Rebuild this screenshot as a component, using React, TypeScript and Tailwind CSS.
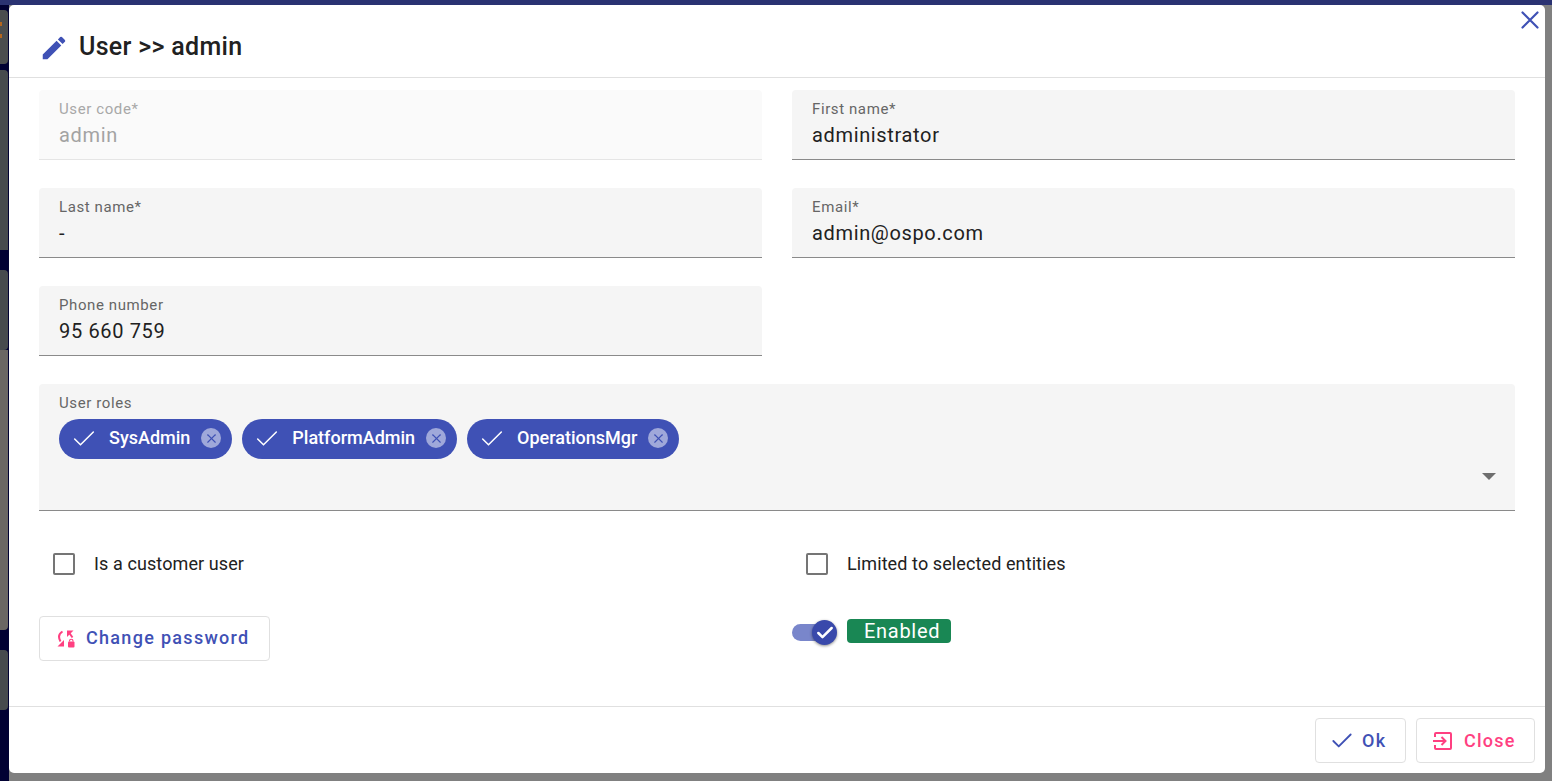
import { Check, X } from "lucide-react"

const roles = ["SysAdmin", "PlatformAdmin", "OperationsMgr"]

function Field({ label, value, disabled }: { label: string; value: string; disabled?: boolean }) {
  return (
    <div
      className={`h-[70px] rounded-t-[4px] px-5 pt-[11px] border-b ${
        disabled ? "bg-[#fafafa] border-[#e5e5e5]" : "bg-[#f5f5f5] border-[#8a8a8a]"
      }`}
    >
      <div
        className={`text-[15px] leading-[17px] tracking-[0.6px] ${disabled ? "text-[#a8a8a8]" : "text-[#666666]"}`}
      >
        {label}
      </div>
      <div
        className={`mt-[5px] text-[20px] leading-[24px] tracking-[0.65px] ${disabled ? "text-[#a3a3a3]" : "text-[#212121]"}`}
      >
        {value}
      </div>
    </div>
  )
}

function CheckRow({ label }: { label: string }) {
  return (
    <div className="flex items-center h-[24px] pl-[14px]">
      <div className="w-[22px] h-[22px] rounded-[2px] border-2 border-[#757575]" />
      <span className="ml-[19px] text-[18px] text-[#212121] leading-[24px] tracking-[0.1px]">{label}</span>
    </div>
  )
}

function PasswordIcon() {
  return (
    <svg width="20" height="20" viewBox="0 0 20 20" fill="none" className="shrink-0">
      <path d="M5.500 2.500C2 4.500 1 8 3.500 12.500" stroke="#ff4081" strokeWidth="2" />
      <path d="M7 11v6.500H0.500z" fill="#ff4081" />
      <path d="M10 1.500h6.500L10 8z" fill="#ff4081" />
      <path d="M12 3.500l3.500 5" stroke="#ff4081" strokeWidth="2" />
      <rect x="11" y="12.500" width="6.500" height="6" rx="1" fill="#ff4081" />
      <path d="M12.500 12.500v-0.500a1.750 1.750 0 0 1 3.500 0v0.500" stroke="#ff4081" strokeWidth="1.200" />
    </svg>
  )
}

export default function App() {
  return (
    <div className="relative w-[1552px] h-[781px] overflow-hidden bg-[#808080] font-['Roboto',sans-serif]">
      {/* page behind the dialog */}
      <div className="h-[5px] bg-[#2a3272]" />
      <div className="absolute left-0 top-[5px] bottom-0 w-[9px] bg-[#010133] flex flex-col">
        <div className="relative mt-[5px] h-[54px] w-[8px] rounded-r-[4px] bg-[#4b4d4e]">
          <div className="absolute left-0 top-[12px] w-[2px] h-[4px] bg-[#b5651d]" />
          <div className="absolute left-0 top-[24px] w-[2px] h-[4px] bg-[#b5651d]" />
        </div>
        <div className="mt-[6px] h-[180px] w-[8px] rounded-tr-[4px] bg-[#474b4d]" />
        <div className="mt-[20px] h-[80px] w-[8px] rounded-r-[4px] bg-[#474b4d]" />
        <div className="h-[280px] w-[8px] rounded-br-[4px] bg-[#6b6763]" />
        <div className="mt-[20px] h-[60px] w-[8px] rounded-r-[4px] bg-[#474b4d]" />
      </div>

      {/* dialog */}
      <div className="absolute left-[9px] top-[5px] w-[1536px] h-[768px] rounded-[5px] bg-white flex flex-col">
        <button className="absolute right-[5px] top-[5px]">
          <svg width="20" height="20" viewBox="0 0 20 20" stroke="#3f51b5" strokeWidth="2.200" strokeLinecap="round">
            <path d="M2.500 2.500l15 15M17.500 2.500l-15 15" />
          </svg>
        </button>

        <div className="h-[73px] shrink-0 flex items-center pl-[30px] pt-[13px] pb-[2px] border-b border-[#e0e0e0]">
          <svg width="30" height="30" viewBox="0 0 24 24" fill="#3f51b5" className="shrink-0 mt-[2px]">
            <path d="M3 17.250V21h3.750L17.810 9.940l-3.750-3.750L3 17.250zM20.710 7.040a1 1 0 0 0 0-1.410l-2.340-2.340a1 1 0 0 0-1.410 0l-1.830 1.830 3.750 3.750 1.830-1.830z" />
          </svg>
          <h1 className="ml-[10px] text-[25px] font-medium text-[#212121] tracking-[0.3px] leading-[32px]">
            User &gt;&gt; admin
          </h1>
        </div>

        <div className="flex-1 px-[30px] pt-[12px]">
          <div className="grid grid-cols-2 gap-x-[30px] gap-y-[28px]">
            <Field label="User code*" value="admin" disabled />
            <Field label="First name*" value="administrator" />
            <Field label="Last name*" value="-" />
            <Field label="Email*" value="admin@ospo.com" />
            <Field label="Phone number" value="95 660 759" />
            <div />
          </div>

          <div className="relative mt-[28px] h-[127px] rounded-t-[4px] bg-[#f5f5f5] border-b border-[#8a8a8a] px-5 pt-[11px]">
            <div className="text-[15px] leading-[17px] tracking-[0.6px] text-[#666666]">User roles</div>
            <div className="mt-[7px] flex gap-[10px]">
              {roles.map((r) => (
                <div key={r} className="flex items-center h-[40px] rounded-full bg-[#3f51b5] pl-[11px] pr-[11px] text-white">
                  <Check size={28} strokeWidth={1.3} />
                  <span className="ml-[11px] pb-[2px] text-[18px] font-medium leading-[24px]">{r}</span>
                  <span className="ml-[11px] mb-[2px] w-[20px] h-[20px] rounded-full bg-[#9fa8da] flex items-center justify-center text-[#3f51b5]">
                    <X size={15} strokeWidth={1.800} />
                  </span>
                </div>
              ))}
            </div>
            <div className="absolute right-[19px] top-[89px] w-0 h-0 border-x-[7px] border-x-transparent border-t-[7px] border-t-[#6e6e6e]" />
          </div>

          <div className="mt-[41px] grid grid-cols-2 gap-x-[30px]">
            <CheckRow label="Is a customer user" />
            <CheckRow label="Limited to selected entities" />
          </div>

          <div className="mt-[40px] grid grid-cols-2 gap-x-[30px]">
            <div>
              <button className="flex items-center h-[45px] w-[231px] rounded-[4px] border border-[#e0e0e0] pl-[17px] text-[#3f51b5] text-[18px] font-medium tracking-[1.3px]">
                <PasswordIcon />
                <span className="ml-[9px] pb-[2px]">Change password</span>
              </button>
            </div>
            <div className="flex items-start">
              <div className="relative mt-[8px] w-[32px] h-[17px] rounded-full bg-[#7986cb]">
                <div className="absolute left-[20px] top-[-4px] w-[25px] h-[25px] rounded-full bg-[#3949ab] shadow-[0_1px_3px_rgba(0,0,0,0.45)] flex items-center justify-center text-white">
                  <Check size={20} strokeWidth={3} />
                </div>
              </div>
              <span className="ml-[23px] mt-[3px] h-[24px] w-[104px] pl-[17px] rounded-[4px] bg-[#198754] text-white text-[20px] font-normal leading-[24px] tracking-[0.7px]">
                Enabled
              </span>
            </div>
          </div>
        </div>

        <div className="h-[67px] shrink-0 border-t border-[#e0e0e0] flex justify-end items-start gap-[10px] pt-[11px] pr-[10px]">
          <button className="flex items-center gap-[7px] h-[45px] w-[91px] pl-[13px] rounded-[4px] border border-[#e0e0e0] text-[#3f51b5] text-[18px] font-medium tracking-[1.25px]">
            <Check size={26} strokeWidth={1.700} />
            Ok
          </button>
          <button className="flex items-center gap-[12px] h-[45px] w-[119px] pl-[16px] rounded-[4px] border border-[#e0e0e0] text-[#ff4081] text-[18px] font-medium tracking-[1.25px]">
            <svg width="19" height="18" viewBox="0 0 19 18" fill="none" stroke="#ff4081" strokeWidth="2" className="shrink-0">
              <path d="M2 5V2a1 1 0 0 1 1-1h14a1 1 0 0 1 1 1v14a1 1 0 0 1-1 1H3a1 1 0 0 1-1-1v-3" />
              <path d="M0 9h12M8.500 5l4 4-4 4" />
            </svg>
            Close
          </button>
        </div>
      </div>
    </div>
  )
}
